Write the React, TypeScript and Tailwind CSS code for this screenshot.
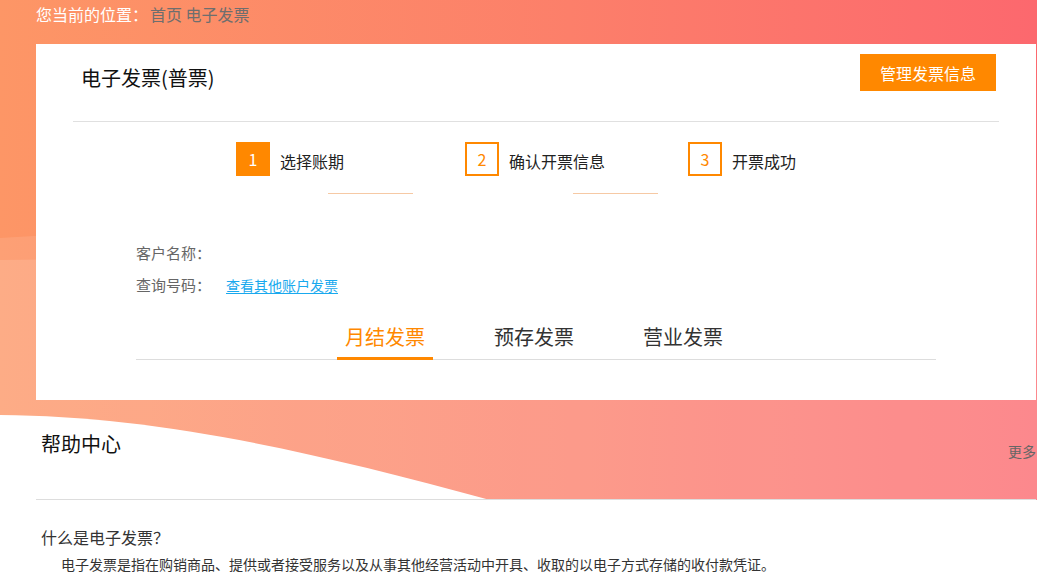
import React from "react";

function Background() {
  return (
    <svg
      className="absolute left-0 top-0 w-full h-[500px] pointer-events-none"
      viewBox="0 0 1037 500"
      preserveAspectRatio="none"
    >
      <defs>
        <linearGradient id="bgGrad" x1="0" y1="0" x2="1" y2="0">
          <stop offset="0" stopColor="#fd9666" />
          <stop offset="0.55" stopColor="#fc7f6a" />
          <stop offset="1" stopColor="#fc686e" />
        </linearGradient>
      </defs>
      <rect x="0" y="0" width="1037" height="500" fill="url(#bgGrad)" />
      <path d="M0,238 Q400,215 1037,170 L1037,500 L0,500 Z" fill="#ffffff" fillOpacity="0.1" />
      <path d="M0,260 Q500,255 1037,240 L1037,500 L0,500 Z" fill="#ffffff" fillOpacity="0.13" />
      <path d="M0,415 C150,416 300,448 490,500 L0,500 Z" fill="#ffffff" />
    </svg>
  );
}

function StepBox({ n, active }: { n: number; active?: boolean }) {
  return active ? (
    <div className="w-[34px] h-[34px] bg-[#ff8800] text-white flex items-center justify-center text-[16px]">
      {n}
    </div>
  ) : (
    <div className="w-[34px] h-[34px] border-2 border-[#ff8800] text-[#ff8800] flex items-center justify-center text-[16px]">
      {n}
    </div>
  );
}

export default function App() {
  return (
    <div className="relative w-full min-h-[587px] bg-white overflow-hidden font-['Noto_Sans_CJK_SC','Microsoft_YaHei',sans-serif]">
      <Background />
      <div className="relative">
        {/* breadcrumb */}
        <div className="h-[44px] pl-[36px] text-[16px] leading-[28px]">
          <span className="text-white">您当前的位置：</span>
          <span className="ml-[2px] text-[#6e6e6e]">首页 电子发票</span>
        </div>

        {/* main card */}
        <div className="ml-[36px] w-[1000px] h-[356px] bg-white">
          <div className="flex justify-between items-start h-[77px]">
            <div className="mt-[20px] pl-[45px] text-[20px] leading-[28px] text-[#111]">电子发票(普票)</div>
            <div className="mt-[10px] mr-[40px] w-[136px] h-[37px] bg-[#ff8800] text-white text-[16px] flex items-center justify-center">
              管理发票信息
            </div>
          </div>
          <div className="mx-[37px] h-px bg-[#e0e0e0]" />

          {/* steps */}
          <div className="flex mt-[20px] ml-[200px]">
            <div className="w-[229px] flex items-center">
              <StepBox n={1} active />
              <span className="ml-[10px] mt-[4px] text-[16px] leading-[24px] text-[#222]">选择账期</span>
            </div>
            <div className="w-[223px] flex items-center">
              <StepBox n={2} />
              <span className="ml-[10px] mt-[4px] text-[16px] leading-[24px] text-[#222]">确认开票信息</span>
            </div>
            <div className="flex items-center">
              <StepBox n={3} />
              <span className="ml-[10px] mt-[4px] text-[16px] leading-[24px] text-[#222]">开票成功</span>
            </div>
          </div>
          <div className="flex mt-[17px] ml-[292px]">
            <div className="w-[85px] h-px bg-[#f6c9a4]" />
            <div className="ml-[160px] w-[85px] h-px bg-[#f6c9a4]" />
          </div>

          {/* customer info */}
          <div className="mt-[43px] pl-[100px] text-[15px] text-[#666]">
            <div className="h-[32px] leading-[32px]">客户名称：</div>
            <div className="h-[32px] leading-[32px] flex items-center">
              <span>查询号码：</span>
              <span className="ml-[15px] text-[14px] text-[#19a9ee] underline underline-offset-2">查看其他账户发票</span>
            </div>
          </div>

          {/* tabs */}
          <div className="mt-[22px] ml-[100px] w-[800px] border-b border-[#dddddd] flex">
            <div className="ml-[201px] px-[8px] pb-[6px] -mb-px border-b-[3px] border-[#ff8800] text-[20px] leading-[28px] text-[#ff8800]">
              月结发票
            </div>
            <div className="ml-[53px] px-[8px] pb-[6px] -mb-px border-b-[3px] border-transparent text-[20px] leading-[28px] text-[#333]">
              预存发票
            </div>
            <div className="ml-[53px] px-[8px] pb-[6px] -mb-px border-b-[3px] border-transparent text-[20px] leading-[28px] text-[#333]">
              营业发票
            </div>
          </div>
        </div>

        {/* help center */}
        <div className="ml-[36px] w-[1000px] h-[100px] border-b border-[#dddddd] flex justify-between items-start">
          <div className="mt-[30px] pl-[5px] text-[20px] leading-[28px] text-[#111]">帮助中心</div>
          <div className="mt-[41px] text-[14px] leading-[20px] text-[#666]">更多</div>
        </div>
        <div className="ml-[36px] w-[1000px]">
          <div className="mt-[25px] pl-[5px] text-[16px] leading-[24px] text-[#333]">什么是电子发票？</div>
          <div className="mt-[5px] pl-[25px] text-[14px] leading-[20px] text-[#333]">
            电子发票是指在购销商品、提供或者接受服务以及从事其他经营活动中开具、收取的以电子方式存储的收付款凭证。
          </div>
        </div>
      </div>
    </div>
  );
}
